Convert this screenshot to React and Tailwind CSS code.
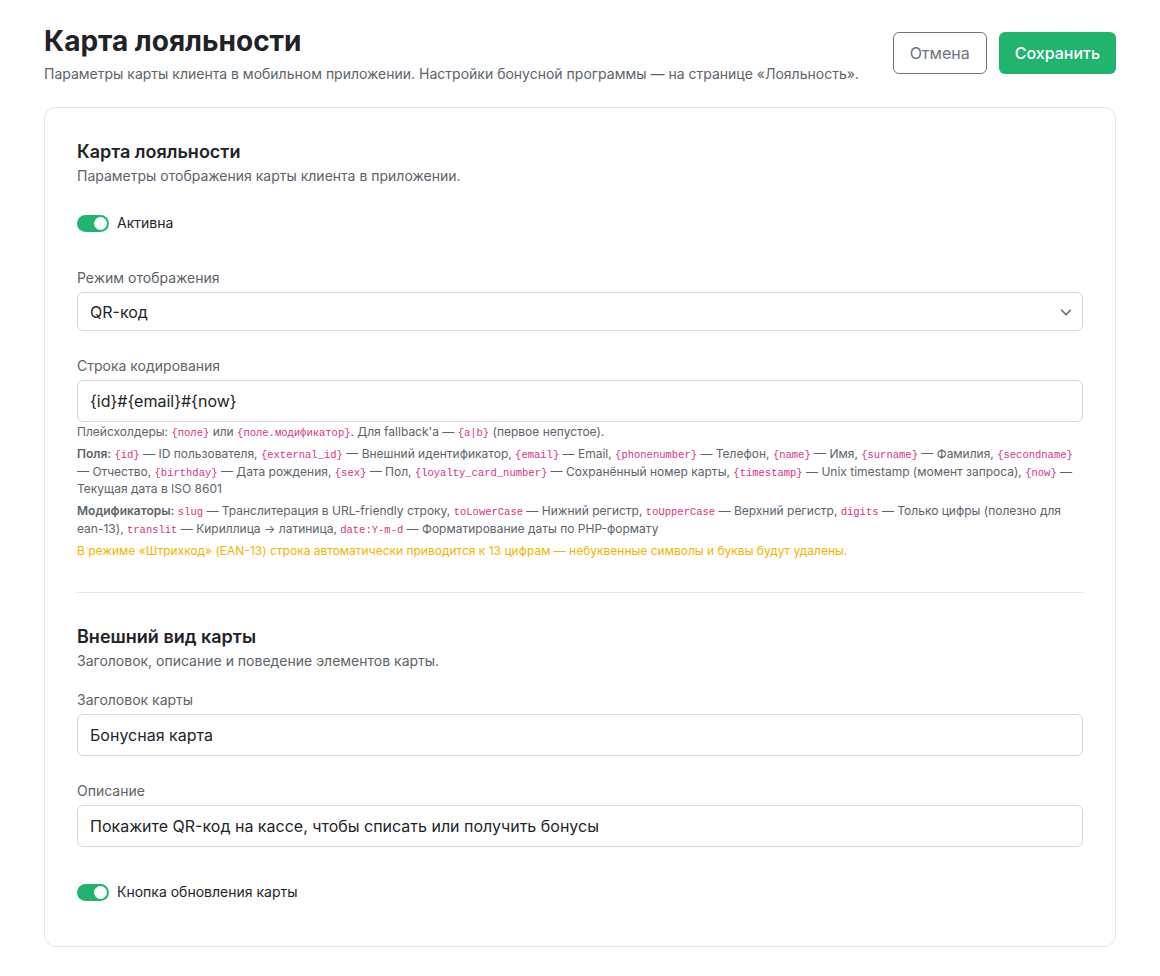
import React, { useState } from 'react';

const Toggle = ({ checked, onChange, label }) => (
    <label className="flex items-center gap-2 cursor-pointer select-none">
        <button
            type="button"
            onClick={() => onChange(!checked)}
            className={`relative w-8 h-[17px] rounded-full transition ${checked ? 'bg-[#20b46e]' : 'bg-gray-300'}`}
        >
            <span
                className={`absolute top-[2px] w-[13px] h-[13px] rounded-full bg-white transition-all ${checked ? 'left-[17px]' : 'left-[2px]'}`}
            />
        </button>
        <span className="text-sm text-[#212529]">{label}</span>
    </label>
);

const Code = ({ children }) => (
    <code className="font-['Liberation_Mono','DejaVu_Sans_Mono',monospace] text-[10.5px] leading-none text-[#d63384]">{children}</code>
);

const fields = [
    ['{id}', 'ID пользователя'],
    ['{external_id}', 'Внешний идентификатор'],
    ['{email}', 'Email'],
    ['{phonenumber}', 'Телефон'],
    ['{name}', 'Имя'],
    ['{surname}', 'Фамилия'],
    ['{secondname}', 'Отчество'],
    ['{birthday}', 'Дата рождения'],
    ['{sex}', 'Пол'],
    ['{loyalty_card_number}', 'Сохранённый номер карты'],
    ['{timestamp}', 'Unix timestamp (момент запроса)'],
    ['{now}', 'Текущая дата в ISO 8601'],
];

const modifiers = [
    ['slug', 'Транслитерация в URL-friendly строку'],
    ['toLowerCase', 'Нижний регистр'],
    ['toUpperCase', 'Верхний регистр'],
    ['digits', 'Только цифры (полезно для ean-13)'],
    ['translit', 'Кириллица → латиница'],
    ['date:Y-m-d', 'Форматирование даты по PHP-формату'],
];

const inputCls = 'w-full h-[42px] px-3 border border-[#d4d6d9] rounded-md text-base text-[#212529] bg-white focus:outline-none focus:border-[#20b46e]';

const LoyaltyCard = () => {
    const [active, setActive] = useState(true);
    const [refreshBtn, setRefreshBtn] = useState(true);
    const [mode, setMode] = useState('qr');
    const [pattern, setPattern] = useState('{id}#{email}#{now}');
    const [title, setTitle] = useState('Бонусная карта');
    const [description, setDescription] = useState('Покажите QR-код на кассе, чтобы списать или получить бонусы');

    return (
        <div className="min-h-screen bg-white font-['Inter','Liberation_Sans',sans-serif] text-[#212529]">
            <div className="px-11 pt-6 pb-8">
                {/* Header */}
                <div className="flex items-start justify-between">
                    <div>
                        <h1 className="text-[28px] leading-[34px] font-bold text-[#1f2328]">Карта лояльности</h1>
                        <p className="mt-[6px] text-sm text-[#5c636a]">
                            Параметры карты клиента в мобильном приложении. Настройки бонусной программы — на странице «Лояльность».
                        </p>
                    </div>
                    <div className="flex gap-3 mt-2">
                        <button className="h-[42px] px-4 border border-[#6c757d] rounded-md text-base text-[#6c757d] bg-white">Отмена</button>
                        <button className="h-[42px] px-4 rounded-md text-base font-medium text-white bg-[#20b46e]">Сохранить</button>
                    </div>
                </div>

                {/* Card */}
                <div className="mt-[23px] border border-[#e3e5e8] rounded-xl px-8 pt-[30px] pb-[44px]">
                    <h2 className="text-lg leading-7 font-semibold text-[#1f2328]">Карта лояльности</h2>
                    <p className="text-sm text-[#5c636a]">Параметры отображения карты клиента в приложении.</p>

                    <div className="mt-[27px]">
                        <Toggle checked={active} onChange={setActive} label="Активна" />
                    </div>

                    <div className="mt-[35px]">
                        <label className="block text-sm text-[#5c636a] mb-[4px]">Режим отображения</label>
                        <div className="relative">
                            <select
                                value={mode}
                                onChange={(e) => setMode(e.target.value)}
                                className="appearance-none w-full h-[39px] px-3 border border-[#d4d6d9] rounded-md text-base bg-white focus:outline-none"
                            >
                                <option value="qr">QR-код</option>
                                <option value="barcode">Штрихкод</option>
                            </select>
                            <svg className="absolute right-[10px] top-1/2 -translate-y-1/2 pointer-events-none" width="14" height="14" viewBox="0 0 16 16" fill="none" stroke="#6c757d" strokeWidth="2" strokeLinecap="round" strokeLinejoin="round">
                                <path d="M3 6l5 5 5-5" />
                            </svg>
                        </div>
                    </div>

                    <div className="mt-[25px]">
                        <label className="block text-sm text-[#5c636a] mb-[4px]">Строка кодирования</label>
                        <input value={pattern} onChange={(e) => setPattern(e.target.value)} className={inputCls} />
                        <div className="mt-[1px] text-xs leading-[17.5px] text-[#5c636a] space-y-[4.5px]">
                            <p>
                                Плейсхолдеры: <Code>{'{поле}'}</Code> или <Code>{'{поле.модификатор}'}</Code>. Для fallback'а — <Code>{'{a|b}'}</Code> (первое непустое).
                            </p>
                            <p>
                                <strong className="font-semibold">Поля:</strong>{' '}
                                {fields.map(([k, v], i) => (
                                    <React.Fragment key={k}>
                                        <Code>{k}</Code> — {v}{i < fields.length - 1 ? ', ' : ''}
                                    </React.Fragment>
                                ))}
                            </p>
                            <p>
                                <strong className="font-semibold">Модификаторы:</strong>{' '}
                                {modifiers.map(([k, v], i) => (
                                    <React.Fragment key={k}>
                                        <Code>{k}</Code> — {v}{i < modifiers.length - 1 ? ', ' : ''}
                                    </React.Fragment>
                                ))}
                            </p>
                            <p className="text-[#f5b400]">
                                В режиме «Штрихкод» (EAN-13) строка автоматически приводится к 13 цифрам — небуквенные символы и буквы будут удалены.
                            </p>
                        </div>
                    </div>

                    <hr className="mt-[33px] border-t border-[#e3e5e8]" />

                    <h2 className="mt-[30px] text-lg leading-7 font-semibold text-[#1f2328]">Внешний вид карты</h2>
                    <p className="text-sm text-[#5c636a]">Заголовок, описание и поведение элементов карты.</p>

                    <div className="mt-[19px]">
                        <label className="block text-sm text-[#5c636a] mb-[4px]">Заголовок карты</label>
                        <input value={title} onChange={(e) => setTitle(e.target.value)} className={inputCls} />
                    </div>

                    <div className="mt-[25px]">
                        <label className="block text-sm text-[#5c636a] mb-[4px]">Описание</label>
                        <input value={description} onChange={(e) => setDescription(e.target.value)} className={inputCls} />
                    </div>

                    <div className="mt-[35px]">
                        <Toggle checked={refreshBtn} onChange={setRefreshBtn} label="Кнопка обновления карты" />
                    </div>
                </div>
            </div>
        </div>
    );
};

export default LoyaltyCard;
